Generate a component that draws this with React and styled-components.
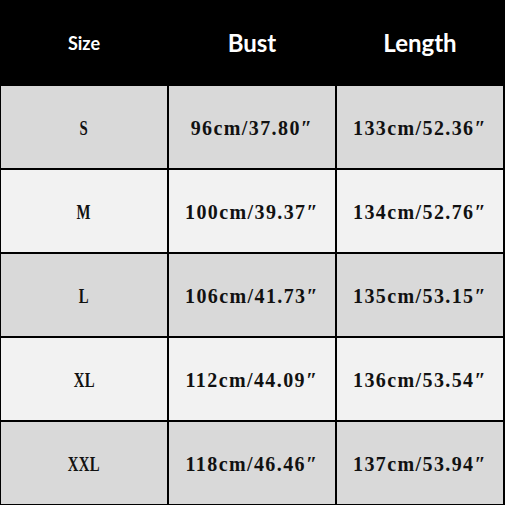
import React from "react";
import styled, { createGlobalStyle } from "styled-components";

const Global = createGlobalStyle`
  html, body { margin: 0; padding: 0; background: #fff; }
`;

const Table = styled.div`
  width: 505px;
  height: 505px;
  box-sizing: border-box;
  background: #000;
  display: grid;
  grid-template-columns: 166px 166px 166px;
  grid-template-rows: 84px repeat(5, 82px);
  column-gap: 2px;
  row-gap: 2px;
  padding: 0 1px 1px 1px;
`;

const HeadCell = styled.div`
  display: flex;
  align-items: center;
  justify-content: center;
  color: #fff;
  font-family: Lato, "Open Sans", sans-serif;
  font-weight: 700;
  font-size: ${(p) => (p.$small ? "18px" : "24px")};
  padding-top: ${(p) => (p.$small ? "2px" : "0")};
`;

const Cell = styled.div`
  display: flex;
  align-items: center;
  justify-content: center;
  background: ${(p) => (p.$alt ? "#f2f2f2" : "#d9d9d9")};
  color: #111;
  font-family: "Liberation Serif", "Times New Roman", serif;
  font-weight: 700;
  font-size: 20px;
`;

const Text = styled.span`
  display: inline-block;
  letter-spacing: ${(p) => (p.$narrow ? "0.5px" : "1.4px")};
  transform: ${(p) => (p.$narrow ? "scaleX(0.74)" : "none")};
  margin-top: 2px;
`;

const rows = [
  ["S", "96cm/37.80″", "133cm/52.36″"],
  ["M", "100cm/39.37″", "134cm/52.76″"],
  ["L", "106cm/41.73″", "135cm/53.15″"],
  ["XL", "112cm/44.09″", "136cm/53.54″"],
  ["XXL", "118cm/46.46″", "137cm/53.94″"],
];

export default function App() {
  return (
    <>
      <Global />
      <Table>
        <HeadCell $small>Size</HeadCell>
        <HeadCell>Bust</HeadCell>
        <HeadCell>Length</HeadCell>
        {rows.map((r, i) =>
          r.map((v, j) => (
            <Cell key={`${i}-${j}`} $alt={i % 2 === 1}>
              <Text $narrow={j === 0}>{v}</Text>
            </Cell>
          ))
        )}
      </Table>
    </>
  );
}
